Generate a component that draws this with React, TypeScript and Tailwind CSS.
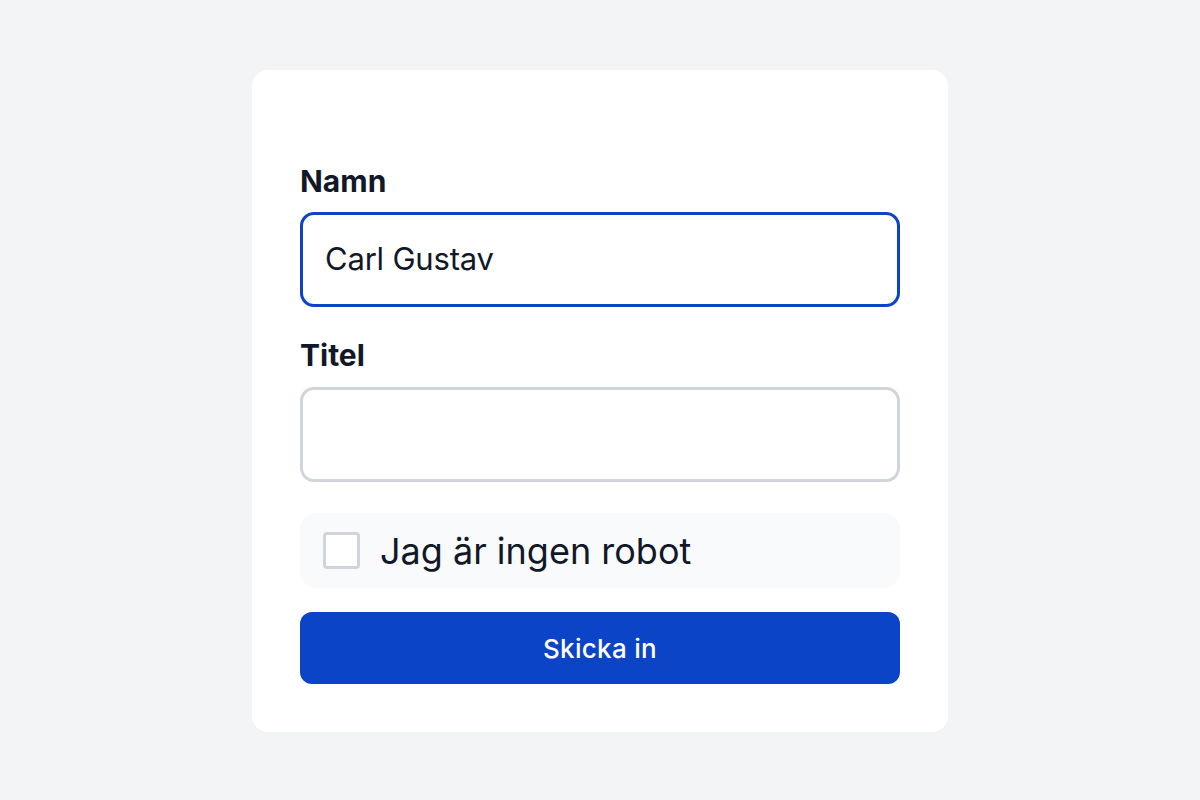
import React from "react";

export default function App() {
  return (
    <div
      className="min-h-screen w-full bg-[#f3f4f6] flex justify-center pt-[70px]"
      style={{ fontFamily: "Inter, 'Noto Sans', sans-serif" }}
    >
      <div className="w-[696px] h-[662px] bg-white rounded-[16px] px-[48px] pt-[93px] pb-[48px] flex flex-col">
        <label className="text-[30px] leading-[36px] font-bold text-[#111827]">Namn</label>
        <div className="mt-[13px] h-[95px] rounded-[14px] border-[3px] border-[#0b44c7] flex items-center pl-[22px]">
          <span className="text-[31px] text-[#111827] tracking-[-0.2px]">Carl Gustav</span>
        </div>
        <label className="mt-[30px] text-[30px] leading-[36px] font-bold text-[#111827]">Titel</label>
        <div className="mt-[14px] h-[95px] rounded-[14px] border-[3px] border-[#d1d5db]" />
        <div className="mt-[31px] h-[75px] rounded-[16px] bg-[#f9fafb] flex items-center pl-[23px]">
          <div className="w-[37px] h-[37px] rounded-[4px] border-[3px] border-[#d1d5db] bg-white" />
          <span className="ml-[20px] text-[36px] text-[#111827] tracking-[0px]">Jag är ingen robot</span>
        </div>
        <button className="mt-[24px] h-[72px] rounded-[12px] bg-[#0b44c7] text-white text-[26px] font-medium tracking-[0.3px] flex items-center justify-center">
          Skicka in
        </button>
      </div>
    </div>
  );
}
